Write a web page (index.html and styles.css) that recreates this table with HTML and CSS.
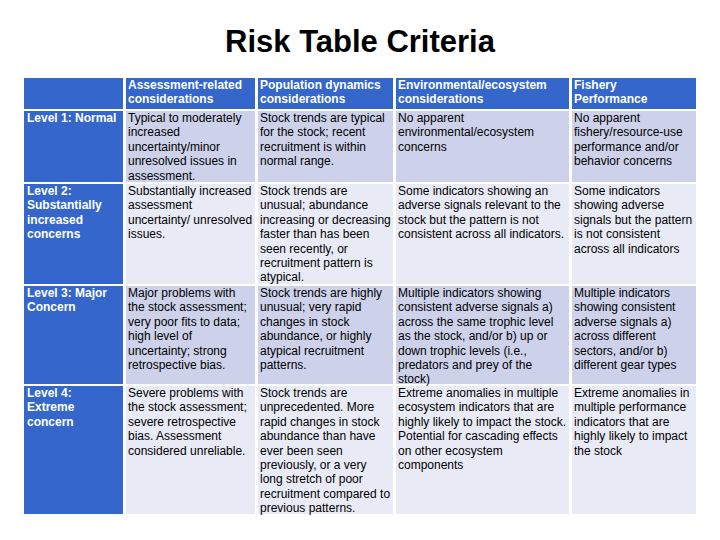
FILE: index.html
```html
<!DOCTYPE html>
<html>
<head>
<meta charset="utf-8">
<link rel="stylesheet" href="styles.css">
</head>
<body>
<div class="page">
  <h1 class="title">Risk Table Criteria</h1>
  <div class="risk">
    <div class="cell head"></div>
    <div class="cell head">Assessment-related<br>considerations</div>
    <div class="cell head">Population dynamics<br>considerations</div>
    <div class="cell head">Environmental/ecosystem<br>considerations</div>
    <div class="cell head">Fishery<br>Performance</div>

    <div class="cell level">Level 1: Normal</div>
    <div class="cell dark">Typical to moderately<br>increased<br>uncertainty/minor<br>unresolved issues in<br>assessment.</div>
    <div class="cell dark">Stock trends are typical<br>for the stock; recent<br>recruitment is within<br>normal range.</div>
    <div class="cell dark">No apparent<br>environmental/ecosystem<br>concerns</div>
    <div class="cell dark">No apparent<br>fishery/resource-use<br>performance and/or<br>behavior concerns</div>

    <div class="cell level">Level 2:<br>Substantially<br>increased<br>concerns</div>
    <div class="cell light">Substantially increased<br>assessment<br>uncertainty/ unresolved<br>issues.</div>
    <div class="cell light">Stock trends are<br>unusual; abundance<br>increasing or decreasing<br>faster than has been<br>seen recently, or<br>recruitment pattern is<br>atypical.</div>
    <div class="cell light">Some indicators showing an<br>adverse signals relevant to the<br>stock but the pattern is not<br>consistent across all indicators.</div>
    <div class="cell light">Some indicators<br>showing adverse<br>signals but the pattern<br>is not consistent<br>across all indicators</div>

    <div class="cell level">Level 3: Major<br>Concern</div>
    <div class="cell dark">Major problems with<br>the stock assessment;<br>very poor fits to data;<br>high level of<br>uncertainty; strong<br>retrospective bias.</div>
    <div class="cell dark">Stock trends are highly<br>unusual; very rapid<br>changes in stock<br>abundance, or highly<br>atypical recruitment<br>patterns.</div>
    <div class="cell dark">Multiple indicators showing<br>consistent adverse signals a)<br>across the same trophic level<br>as the stock, and/or b) up or<br>down trophic levels (i.e.,<br>predators and prey of the<br>stock)</div>
    <div class="cell dark">Multiple indicators<br>showing consistent<br>adverse signals a)<br>across different<br>sectors, and/or b)<br>different gear types</div>

    <div class="cell level">Level 4:<br>Extreme<br>concern</div>
    <div class="cell light">Severe problems with<br>the stock assessment;<br>severe retrospective<br>bias. Assessment<br>considered unreliable.</div>
    <div class="cell light">Stock trends are<br>unprecedented. More<br>rapid changes in stock<br>abundance than have<br>ever been seen<br>previously, or a very<br>long stretch of poor<br>recruitment compared to<br>previous patterns.</div>
    <div class="cell light">Extreme anomalies in multiple<br>ecosystem indicators that are<br>highly likely to impact the stock.<br>Potential for cascading effects<br>on other ecosystem<br>components</div>
    <div class="cell light">Extreme anomalies in<br>multiple performance<br>indicators that are<br>highly likely to impact<br>the stock</div>
  </div>
</div>
</body>
</html>
```

FILE: styles.css
```css
html, body {
  margin: 0;
  padding: 0;
  background: #ffffff;
}
.page {
  width: 720px;
  height: 540px;
  font-family: "Liberation Sans", Arial, sans-serif;
  color: #000;
  padding-top: 23px;
  box-sizing: border-box;
}
.title {
  margin: 0 0 17px 0;
  height: 38px;
  text-align: center;
  font-size: 31px;
  font-weight: bold;
  line-height: 38px;
  color: #000;
}
.risk {
  margin-left: 24px;
  display: grid;
  grid-template-columns: 99px 129px 135px 173px 124px;
  grid-template-rows: 31px 71px 100px 98px 128px;
  column-gap: 3px;
  row-gap: 2px;
  font-size: 12px;
  line-height: 14.4px;
}
.cell {
  padding: 0 0 0 2px;
  white-space: nowrap;
  overflow: visible;
}
.head {
  background: #3466cc;
  color: #ffffff;
  font-weight: bold;
}
.level {
  background: #3466cc;
  color: #ffffff;
  font-weight: bold;
  padding-left: 3px;
}
.dark {
  background: #cdd2ea;
}
.light {
  background: #e8eaf5;
}
```
